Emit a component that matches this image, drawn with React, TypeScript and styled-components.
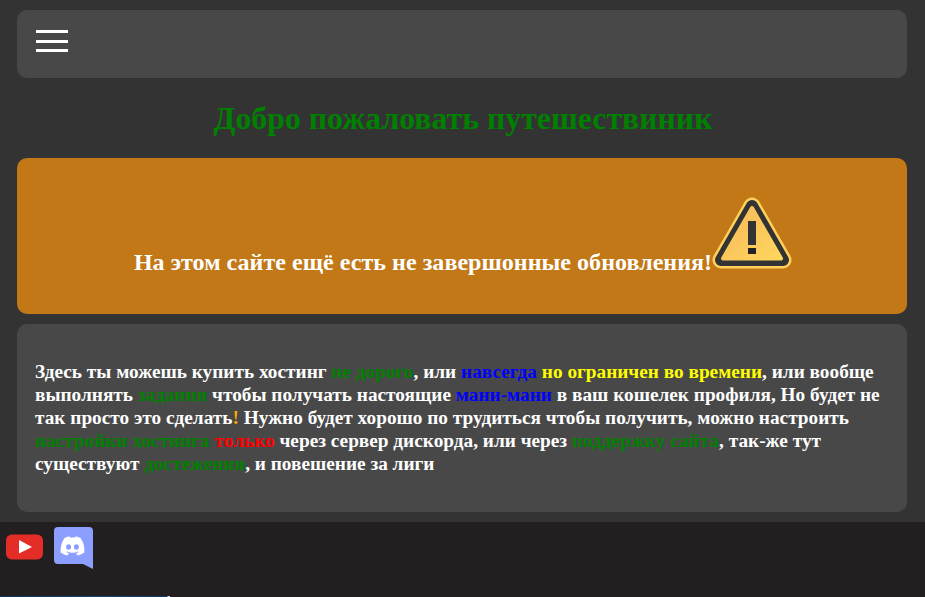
import styled, { createGlobalStyle } from 'styled-components'

const GlobalStyle = createGlobalStyle`
    html, body {
        margin: 0;
        padding: 0;
        background: #333333;
        overflow: hidden;
    }
    body {
        font-family: "Liberation Serif", "Times New Roman", serif;
    }
`

const Page = styled.div`
    display: flex;
    flex-direction: column;
    width: 925px;
    height: 597px;
    overflow: hidden;
`

const Main = styled.main`
    display: flex;
    flex-direction: column;
    flex: 1;
    padding: 10px 18px 10px 17px;
`

const Header = styled.header`
    display: flex;
    align-items: flex-start;
    height: 68px;
    padding: 20px 0 0 19px;
    box-sizing: border-box;
    background: #484848;
    border-radius: 10px;
`

const Burger = styled.div`
    display: flex;
    flex-direction: column;
    justify-content: space-between;
    width: 32px;
    height: 22px;
`

const BurgerLine = styled.span`
    display: block;
    height: 3px;
    background: #ffffff;
`

const Title = styled.h1`
    margin: 0;
    padding: 22px 0 21px 2px;
    font-size: 31.8px;
    line-height: 37px;
    font-weight: bold;
    text-align: center;
    color: #008000;
`

const Banner = styled.section`
    height: 156px;
    padding: 39px 0 0 2px;
    box-sizing: border-box;
    background: #c27816;
    border-radius: 10px;
    color: #ffffff;
    font-size: 24px;
    font-weight: bold;
    letter-spacing: 0.04px;
    line-height: 28px;
    text-align: center;
`

const WarningSvg = styled.svg`
    vertical-align: baseline;
    margin-bottom: 1px;
`

const Card = styled.section`
    margin-top: 10px;
    height: 188px;
    padding: 36px 18px 0;
    box-sizing: border-box;
    background: #484848;
    border-radius: 10px;
    color: #ffffff;
    font-size: 19.3px;
    line-height: 23px;
    font-weight: bold;
`

const Mark = styled.span<{ $color: string }>`
    color: ${p => p.$color};
`

const Footer = styled.footer`
    display: flex;
    flex-direction: column;
    height: 75px;
    background: #231f20;
`

const SocialRow = styled.div`
    display: flex;
    align-items: flex-start;
    flex: 1;
    gap: 11px;
    padding: 5px 0 0 6px;
`

const YoutubeSvg = styled.svg`
    margin-top: 7px;
`

const CutImage = styled.div`
    width: 170px;
    height: 1px;
    background: linear-gradient(90deg, #0c3560 0%, #14487a 60%, #0f3a68 98%, #d8d8e8 99%);
`

function WarningIcon() {
    return (
        <WarningSvg width="80" height="72" viewBox="0 0 80 72">
            <defs>
                <linearGradient id="warnFill" x1="0" y1="0" x2="1" y2="1">
                    <stop offset="0" stopColor="#f6b95a" />
                    <stop offset="1" stopColor="#ffd65e" />
                </linearGradient>
            </defs>
            <path
                d="M40 9 L71 63 H9 Z"
                fill="#ffd05c"
                stroke="#ffd05c"
                strokeWidth="17"
                strokeLinejoin="round"
            />
            <path
                d="M40 9 L71 63 H9 Z"
                fill="#333333"
                stroke="#333333"
                strokeWidth="12"
                strokeLinejoin="round"
            />
            <path
                d="M40 11 L69 61.5 H11 Z"
                fill="url(#warnFill)"
                stroke="url(#warnFill)"
                strokeWidth="4"
                strokeLinejoin="round"
            />
            <path d="M36 24 H44 V48 H36 Z" fill="#333333" />
            <path d="M36 51 H44 V57 H36 Z" fill="#222222" />
        </WarningSvg>
    )
}

function YoutubeIcon() {
    return (
        <YoutubeSvg width="37" height="26" viewBox="0 0 37 26">
            <rect x="0" y="0.5" width="37" height="25" rx="6" fill="#e52d27" />
            <path d="M13 6 L26 13 L13 19.5 Z" fill="#ffffff" />
        </YoutubeSvg>
    )
}

function DiscordIcon() {
    return (
        <svg width="39" height="42" viewBox="0 0 39 42">
            <path
                d="M4 0 H35 A4 4 0 0 1 39 4 V42 L29 37 H4 A4 4 0 0 1 0 33 V4 A4 4 0 0 1 4 0 Z"
                fill="#8c9eff"
            />
            <path
                d="M26.5 11 C24.8 10.1 23.2 9.6 21.7 9.3 L21.1 10.6 C19.4 10.3 17.6 10.3 15.9 10.6 L15.3 9.3 C13.8 9.6 12.2 10.1 10.5 11 C7.5 15.5 6.3 20.5 6.6 25.5 C9 27.2 11.2 28 13.3 28.6 L14.9 26.3 C14.1 26 13.2 25.5 12.4 25 L13.1 24.4 C16.8 26.1 20.2 26.1 23.9 24.4 L24.6 25 C23.8 25.5 22.9 26 22.1 26.3 L23.7 28.6 C25.8 28 28 27.2 30.4 25.5 C30.8 20 29.5 15.3 26.5 11 Z"
                fill="#ffffff"
            />
            <ellipse cx="14.6" cy="20" rx="2.5" ry="2.8" fill="#8c9eff" />
            <ellipse cx="22.4" cy="20" rx="2.5" ry="2.8" fill="#8c9eff" />
        </svg>
    )
}

export default function App() {
    return (
        <Page>
            <GlobalStyle />
            <Main>
                <Header>
                    <Burger>
                        <BurgerLine />
                        <BurgerLine />
                        <BurgerLine />
                    </Burger>
                </Header>
                <Title>Добро пожаловать путешествиник</Title>
                <Banner>
                    На этом сайте ещё есть не завершонные обновления!
                    <WarningIcon />
                </Banner>
                <Card>
                    Здесь ты можешь купить хостинг <Mark $color="#008000">не дорого</Mark>, или{' '}
                    <Mark $color="#0000ff">навсегда</Mark> <Mark $color="#ffff00">но ограничен во времени</Mark>, или
                    вообще выполнять <Mark $color="#008000">задания</Mark> чтобы получать настоящие{' '}
                    <Mark $color="#0000ff">мани-мани</Mark> в ваш кошелек профиля, Но будет не так просто это сделать
                    <Mark $color="#ffa500">!</Mark> Нужно будет хорошо по трудиться чтобы получить, можно настроить{' '}
                    <Mark $color="#008000">настройки хостинга</Mark> <Mark $color="#ff0000">только</Mark> через сервер
                    дискорда, или через <Mark $color="#008000">поддержку сайта</Mark>, так-же тут существуют{' '}
                    <Mark $color="#008000">достежения</Mark>, и повешение за лиги
                </Card>
            </Main>
            <Footer>
                <SocialRow>
                    <YoutubeIcon />
                    <DiscordIcon />
                </SocialRow>
                <CutImage />
            </Footer>
        </Page>
    )
}
